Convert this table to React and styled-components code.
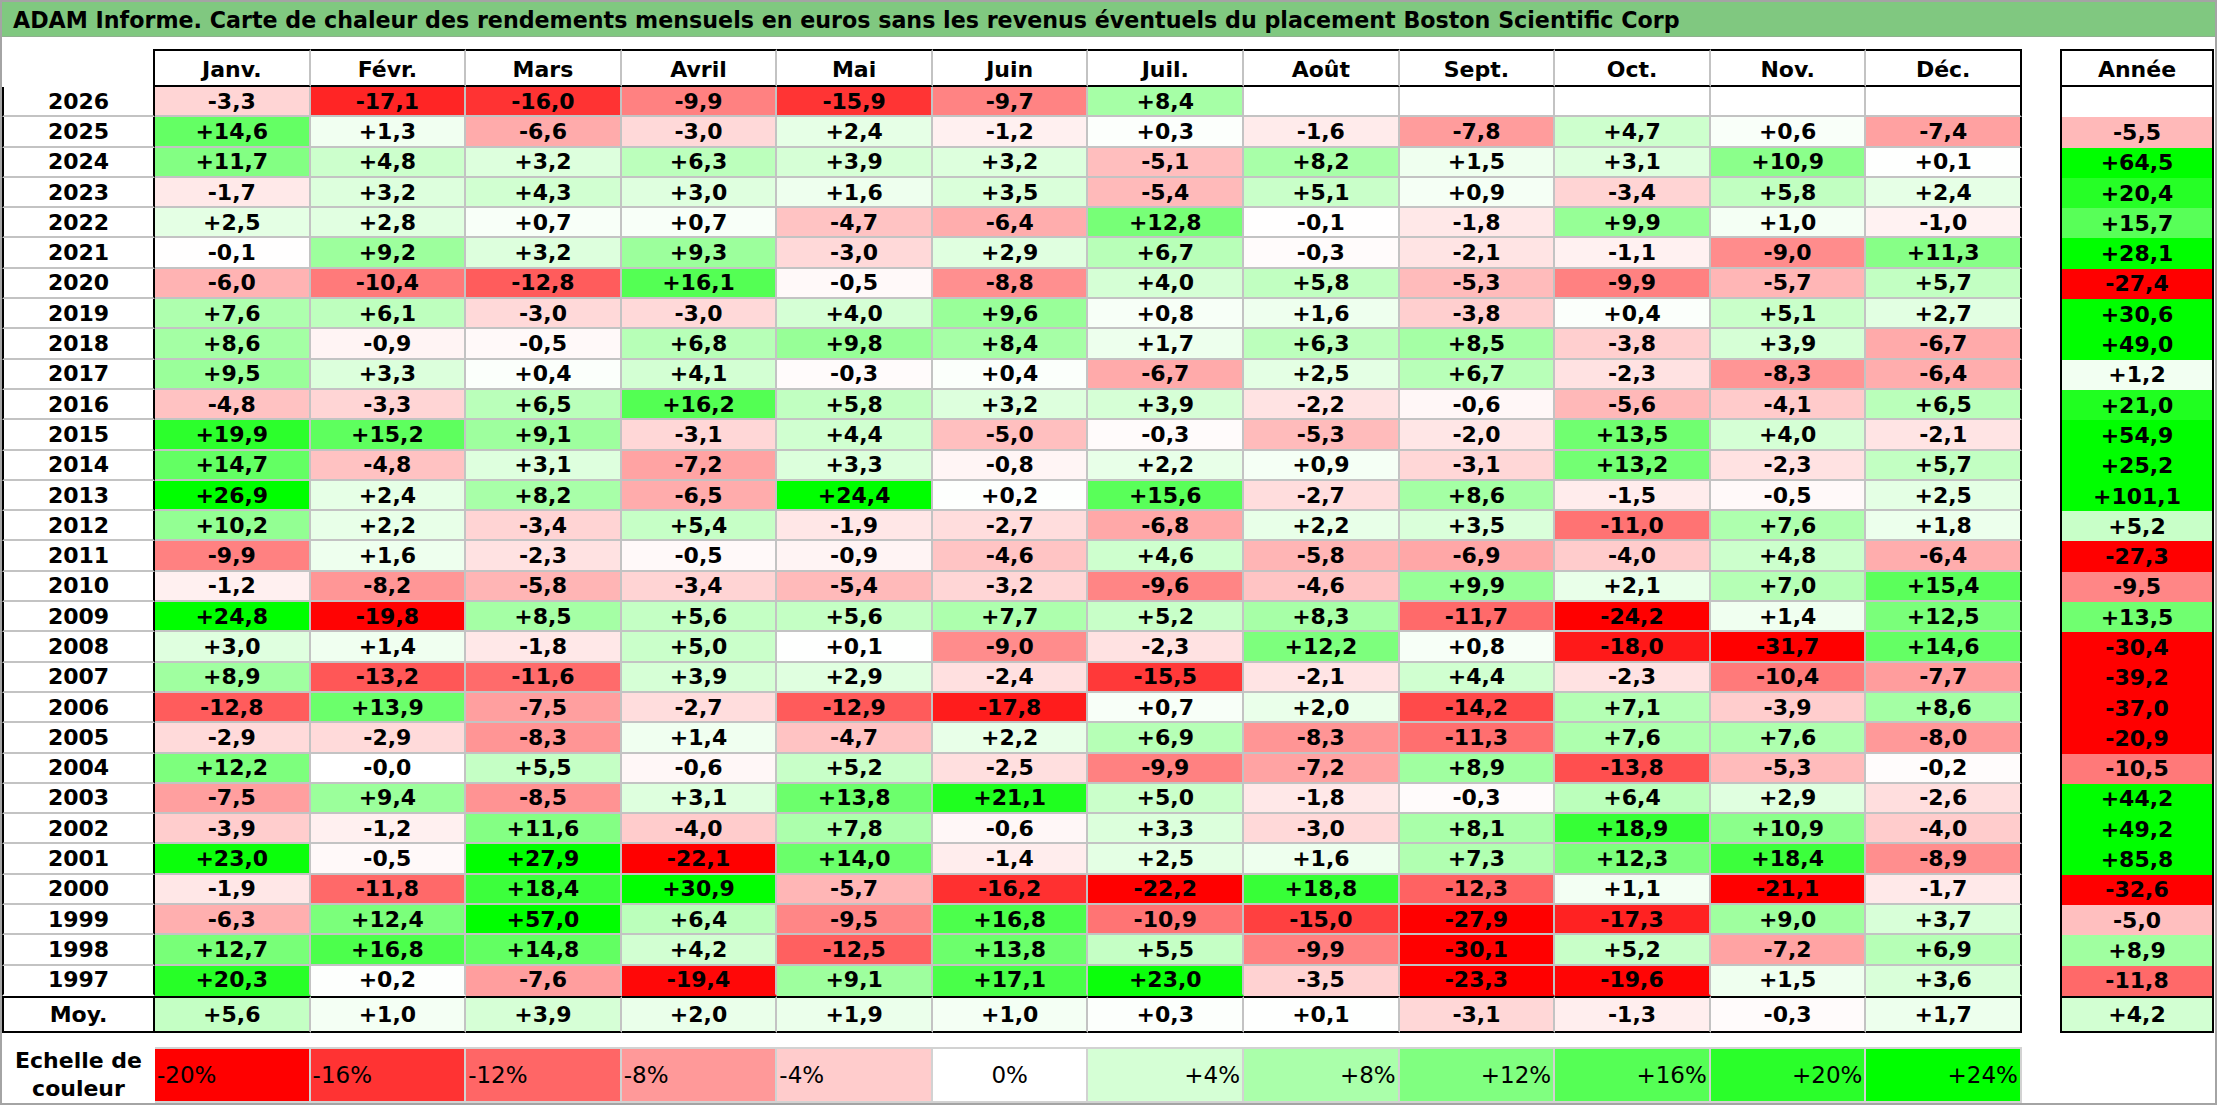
import React from "react";
import styled, { createGlobalStyle } from "styled-components";

const GlobalStyle = createGlobalStyle`
  html, body { margin: 0; padding: 0; background: #fff; }
  body { font-family: "DejaVu Sans", Verdana, sans-serif; color: #000; }
`;

const MONTHS = ["Janv.", "Févr.", "Mars", "Avril", "Mai", "Juin", "Juil.", "Août", "Sept.", "Oct.", "Nov.", "Déc."];

// year, monthly returns, yearly return
const ROWS = [
  ["2026", ["-3,3", "-17,1", "-16,0", "-9,9", "-15,9", "-9,7", "+8,4", null, null, null, null, null], null],
  ["2025", ["+14,6", "+1,3", "-6,6", "-3,0", "+2,4", "-1,2", "+0,3", "-1,6", "-7,8", "+4,7", "+0,6", "-7,4"], "-5,5"],
  ["2024", ["+11,7", "+4,8", "+3,2", "+6,3", "+3,9", "+3,2", "-5,1", "+8,2", "+1,5", "+3,1", "+10,9", "+0,1"], "+64,5"],
  ["2023", ["-1,7", "+3,2", "+4,3", "+3,0", "+1,6", "+3,5", "-5,4", "+5,1", "+0,9", "-3,4", "+5,8", "+2,4"], "+20,4"],
  ["2022", ["+2,5", "+2,8", "+0,7", "+0,7", "-4,7", "-6,4", "+12,8", "-0,1", "-1,8", "+9,9", "+1,0", "-1,0"], "+15,7"],
  ["2021", ["-0,1", "+9,2", "+3,2", "+9,3", "-3,0", "+2,9", "+6,7", "-0,3", "-2,1", "-1,1", "-9,0", "+11,3"], "+28,1"],
  ["2020", ["-6,0", "-10,4", "-12,8", "+16,1", "-0,5", "-8,8", "+4,0", "+5,8", "-5,3", "-9,9", "-5,7", "+5,7"], "-27,4"],
  ["2019", ["+7,6", "+6,1", "-3,0", "-3,0", "+4,0", "+9,6", "+0,8", "+1,6", "-3,8", "+0,4", "+5,1", "+2,7"], "+30,6"],
  ["2018", ["+8,6", "-0,9", "-0,5", "+6,8", "+9,8", "+8,4", "+1,7", "+6,3", "+8,5", "-3,8", "+3,9", "-6,7"], "+49,0"],
  ["2017", ["+9,5", "+3,3", "+0,4", "+4,1", "-0,3", "+0,4", "-6,7", "+2,5", "+6,7", "-2,3", "-8,3", "-6,4"], "+1,2"],
  ["2016", ["-4,8", "-3,3", "+6,5", "+16,2", "+5,8", "+3,2", "+3,9", "-2,2", "-0,6", "-5,6", "-4,1", "+6,5"], "+21,0"],
  ["2015", ["+19,9", "+15,2", "+9,1", "-3,1", "+4,4", "-5,0", "-0,3", "-5,3", "-2,0", "+13,5", "+4,0", "-2,1"], "+54,9"],
  ["2014", ["+14,7", "-4,8", "+3,1", "-7,2", "+3,3", "-0,8", "+2,2", "+0,9", "-3,1", "+13,2", "-2,3", "+5,7"], "+25,2"],
  ["2013", ["+26,9", "+2,4", "+8,2", "-6,5", "+24,4", "+0,2", "+15,6", "-2,7", "+8,6", "-1,5", "-0,5", "+2,5"], "+101,1"],
  ["2012", ["+10,2", "+2,2", "-3,4", "+5,4", "-1,9", "-2,7", "-6,8", "+2,2", "+3,5", "-11,0", "+7,6", "+1,8"], "+5,2"],
  ["2011", ["-9,9", "+1,6", "-2,3", "-0,5", "-0,9", "-4,6", "+4,6", "-5,8", "-6,9", "-4,0", "+4,8", "-6,4"], "-27,3"],
  ["2010", ["-1,2", "-8,2", "-5,8", "-3,4", "-5,4", "-3,2", "-9,6", "-4,6", "+9,9", "+2,1", "+7,0", "+15,4"], "-9,5"],
  ["2009", ["+24,8", "-19,8", "+8,5", "+5,6", "+5,6", "+7,7", "+5,2", "+8,3", "-11,7", "-24,2", "+1,4", "+12,5"], "+13,5"],
  ["2008", ["+3,0", "+1,4", "-1,8", "+5,0", "+0,1", "-9,0", "-2,3", "+12,2", "+0,8", "-18,0", "-31,7", "+14,6"], "-30,4"],
  ["2007", ["+8,9", "-13,2", "-11,6", "+3,9", "+2,9", "-2,4", "-15,5", "-2,1", "+4,4", "-2,3", "-10,4", "-7,7"], "-39,2"],
  ["2006", ["-12,8", "+13,9", "-7,5", "-2,7", "-12,9", "-17,8", "+0,7", "+2,0", "-14,2", "+7,1", "-3,9", "+8,6"], "-37,0"],
  ["2005", ["-2,9", "-2,9", "-8,3", "+1,4", "-4,7", "+2,2", "+6,9", "-8,3", "-11,3", "+7,6", "+7,6", "-8,0"], "-20,9"],
  ["2004", ["+12,2", "-0,0", "+5,5", "-0,6", "+5,2", "-2,5", "-9,9", "-7,2", "+8,9", "-13,8", "-5,3", "-0,2"], "-10,5"],
  ["2003", ["-7,5", "+9,4", "-8,5", "+3,1", "+13,8", "+21,1", "+5,0", "-1,8", "-0,3", "+6,4", "+2,9", "-2,6"], "+44,2"],
  ["2002", ["-3,9", "-1,2", "+11,6", "-4,0", "+7,8", "-0,6", "+3,3", "-3,0", "+8,1", "+18,9", "+10,9", "-4,0"], "+49,2"],
  ["2001", ["+23,0", "-0,5", "+27,9", "-22,1", "+14,0", "-1,4", "+2,5", "+1,6", "+7,3", "+12,3", "+18,4", "-8,9"], "+85,8"],
  ["2000", ["-1,9", "-11,8", "+18,4", "+30,9", "-5,7", "-16,2", "-22,2", "+18,8", "-12,3", "+1,1", "-21,1", "-1,7"], "-32,6"],
  ["1999", ["-6,3", "+12,4", "+57,0", "+6,4", "-9,5", "+16,8", "-10,9", "-15,0", "-27,9", "-17,3", "+9,0", "+3,7"], "-5,0"],
  ["1998", ["+12,7", "+16,8", "+14,8", "+4,2", "-12,5", "+13,8", "+5,5", "-9,9", "-30,1", "+5,2", "-7,2", "+6,9"], "+8,9"],
  ["1997", ["+20,3", "+0,2", "-7,6", "-19,4", "+9,1", "+17,1", "+23,0", "-3,5", "-23,3", "-19,6", "+1,5", "+3,6"], "-11,8"],
];

const AVERAGES = ["+5,6", "+1,0", "+3,9", "+2,0", "+1,9", "+1,0", "+0,3", "+0,1", "-3,1", "-1,3", "-0,3", "+1,7"];
const AVERAGE_YEAR = "+4,2";

const SCALE = [-20, -16, -12, -8, -4, 0, 4, 8, 12, 16, 20, 24];

// red below zero (full at -20), green above (full at +24)
function heat(value) {
  if (value === null || value === undefined) return "#ffffff";
  const v = typeof value === "number" ? value : parseFloat(value.replace(",", "."));
  if (!v) return "#ffffff";
  if (v < 0) {
    const c = Math.round(255 * (1 - Math.min(-v, 20) / 20));
    return `rgb(255, ${c}, ${c})`;
  }
  const c = Math.round(255 * (1 - Math.min(v, 24) / 24));
  return `rgb(${c}, 255, ${c})`;
}

const GRID_LINE = "#c3c3c3";

const Page = styled.div`
  box-sizing: border-box;
  width: 2217px;
  height: 1105px;
  border: 2px solid #a4a4a4;
  display: flex;
  flex-direction: column;
  background: #fff;
  overflow: hidden;
`;

const TitleBar = styled.div`
  box-sizing: border-box;
  flex: none;
  height: 35px;
  display: flex;
  align-items: center;
  padding: 2px 0 0 11px;
  background: #80c880;
  border-bottom: 1px solid #8fb08f;
  font-size: 22.2px;
  font-weight: bold;
  white-space: nowrap;
`;

const Body = styled.div`
  margin-top: 12px;
  display: flex;
  align-items: flex-start;
  gap: 38px;
`;

const LeftSide = styled.div`
  display: flex;
  flex-direction: column;
  gap: 14px;
`;

const Grid = styled.div`
  display: grid;
  width: ${(p) => p.$width}px;
  grid-template-columns: ${(p) => p.$columns};
  grid-template-rows: 38px repeat(30, 30.3px) 37px;
`;

const BaseCell = styled.div`
  box-sizing: border-box;
  display: flex;
  align-items: center;
  justify-content: center;
  font-size: 22px;
  font-weight: bold;
  white-space: nowrap;
  background: #fff;
`;

const Corner = styled(BaseCell)`
  border-right: 2px solid #000;
`;

const HeadCell = styled(BaseCell)`
  padding-top: 2px;
  border-top: 2px solid #000;
  border-bottom: 2px solid #000;
  border-right: 2px solid ${(p) => (p.$last ? "#000" : GRID_LINE)};
`;

const YearCell = styled(BaseCell)`
  border-left: 2px solid #000;
  border-right: 2px solid #000;
  border-top: ${(p) => (p.$avg ? "2px solid #000" : "none")};
  border-bottom: 2px solid ${(p) => (p.$avg ? "#000" : p.$lastRow ? "transparent" : GRID_LINE)};
`;

const ValueCell = styled(BaseCell)`
  border-right: 2px solid ${(p) => (p.$lastCol ? "#000" : GRID_LINE)};
  border-top: ${(p) => (p.$avg ? "2px solid #000" : "none")};
  border-bottom: 2px solid ${(p) => (p.$avg ? "#000" : p.$lastRow ? "transparent" : GRID_LINE)};
`;

const YearHead = styled(BaseCell)`
  padding-top: 2px;
  border: 2px solid #000;
`;

const YearValue = styled(BaseCell)`
  border-left: 2px solid #000;
  border-right: 2px solid #000;
  border-top: ${(p) => (p.$avg ? "2px solid #000" : "none")};
  border-bottom: ${(p) => (p.$avg ? "2px solid #000" : "none")};
`;

const ScaleRow = styled.div`
  display: grid;
  width: 2020px;
  height: 56px;
  grid-template-columns: 153px repeat(12, 1fr);
`;

const ScaleLabel = styled.div`
  display: flex;
  align-items: center;
  justify-content: center;
  text-align: center;
  font-size: 22px;
  font-weight: bold;
  line-height: 28px;
`;

const ScaleCell = styled.div`
  box-sizing: border-box;
  display: flex;
  align-items: center;
  justify-content: ${(p) => p.$align};
  padding: 0 2px;
  font-size: 23px;
  border-top: 2px solid #d2d2d2;
  border-bottom: 2px solid #d2d2d2;
  border-right: 2px solid #d2d2d2;
  white-space: nowrap;
`;

function scaleText(v) {
  if (v > 0) return `+${v}%`;
  return `${v}%`;
}

function scaleAlign(v) {
  if (v < 0) return "flex-start";
  if (v > 0) return "flex-end";
  return "center";
}

export default function App() {
  return (
    <>
      <GlobalStyle />
      <Page>
        <TitleBar>
          ADAM Informe. Carte de chaleur des rendements mensuels en euros sans les revenus éventuels du placement Boston Scientific Corp
        </TitleBar>
        <Body>
          <LeftSide>
            <Grid $width={2020} $columns="153px repeat(12, 1fr)">
              <Corner />
              {MONTHS.map((m, i) => (
                <HeadCell key={m} $last={i === 11}>
                  {m}
                </HeadCell>
              ))}
              {ROWS.map(([year, values], r) => (
                <React.Fragment key={year}>
                  <YearCell $lastRow={r === ROWS.length - 1}>{year}</YearCell>
                  {values.map((v, c) => (
                    <ValueCell
                      key={c}
                      $lastCol={c === 11}
                      $lastRow={r === ROWS.length - 1}
                      style={{ background: heat(v) }}
                    >
                      {v}
                    </ValueCell>
                  ))}
                </React.Fragment>
              ))}
              <YearCell $avg>Moy.</YearCell>
              {AVERAGES.map((v, c) => (
                <ValueCell key={c} $avg $lastCol={c === 11} style={{ background: heat(v) }}>
                  {v}
                </ValueCell>
              ))}
            </Grid>
            <ScaleRow>
              <ScaleLabel>
                Echelle de
                <br />
                couleur
              </ScaleLabel>
              {SCALE.map((v) => (
                <ScaleCell key={v} $align={scaleAlign(v)} style={{ background: heat(v) }}>
                  {scaleText(v)}
                </ScaleCell>
              ))}
            </ScaleRow>
          </LeftSide>
          <Grid $width={154} $columns="154px">
            <YearHead>Année</YearHead>
            {ROWS.map(([year, , total]) => (
              <YearValue key={year} style={{ background: heat(total) }}>
                {total}
              </YearValue>
            ))}
            <YearValue $avg style={{ background: heat(AVERAGE_YEAR) }}>
              {AVERAGE_YEAR}
            </YearValue>
          </Grid>
        </Body>
      </Page>
    </>
  );
}
